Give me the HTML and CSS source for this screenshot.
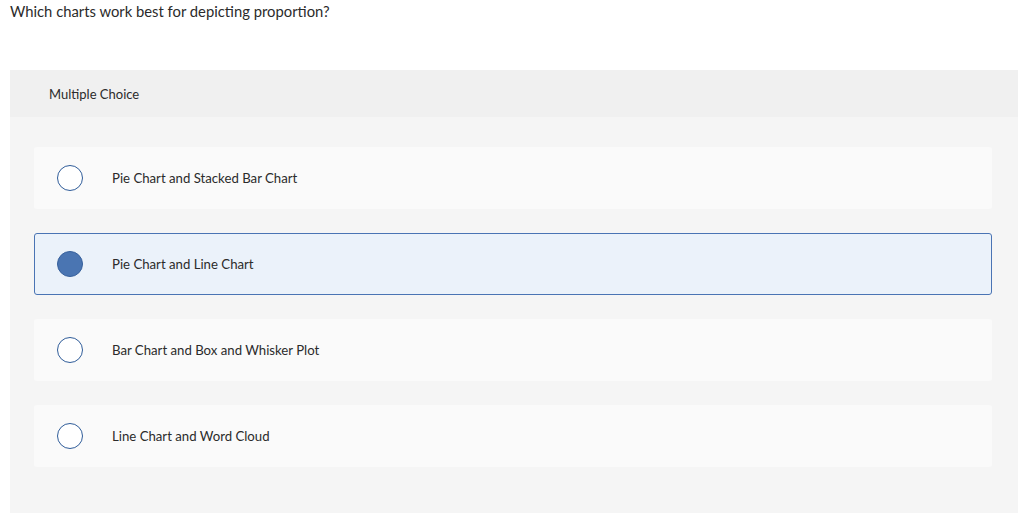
FILE: index.html
```html
<!DOCTYPE html>
<html lang="en">
<head>
<meta charset="utf-8">
<title>Question</title>
<link rel="stylesheet" href="styles.css">
</head>
<body>
<div class="question">Which charts work best for depicting proportion?</div>
<div class="panel">
  <div class="panel-header">Multiple Choice</div>
  <div class="panel-body">
    <div class="option"><span class="radio"></span><span class="label">Pie Chart and Stacked Bar Chart</span></div>
    <div class="option selected"><span class="radio"></span><span class="label">Pie Chart and Line Chart</span></div>
    <div class="option"><span class="radio"></span><span class="label">Bar Chart and Box and Whisker Plot</span></div>
    <div class="option"><span class="radio"></span><span class="label">Line Chart and Word Cloud</span></div>
  </div>
</div>
</body>
</html>
```
FILE: styles.css
```css
html, body {
  margin: 0;
  padding: 0;
  background: #fff;
  font-family: Lato, "Open Sans", sans-serif;
  color: #2b2b2b;
}
.question {
  font-size: 14.8px;
  line-height: 20px;
  padding: 1px 0 0 10px;
  height: 70px;
  box-sizing: border-box;
}
.panel {
  margin: 0 6px 0 10px;
  background: #f5f5f5;
  height: 443px;
}
.panel-header {
  background: #f0f0f0;
  height: 47px;
  display: flex;
  align-items: center;
  padding-left: 39px;
  font-size: 13px;
}
.panel-body {
  padding: 30px 26px 0 24px;
  display: flex;
  flex-direction: column;
  gap: 24px;
}
.option {
  height: 62px;
  box-sizing: border-box;
  background: #fafafa;
  border-radius: 3px;
  display: flex;
  align-items: center;
  padding-left: 23px;
  font-size: 13.2px;
}
.option.selected {
  background: #ebf2fa;
  border: 1px solid #4a74b4;
  padding-left: 22px;
}
.radio {
  width: 26px;
  height: 26px;
  box-sizing: border-box;
  border: 1px solid #2f5c99;
  border-radius: 50%;
  background: #fff;
  flex: none;
}
.selected .radio {
  background: #4a75b2;
  border-color: #36609c;
}
.label {
  margin-left: 29px;
}
```
